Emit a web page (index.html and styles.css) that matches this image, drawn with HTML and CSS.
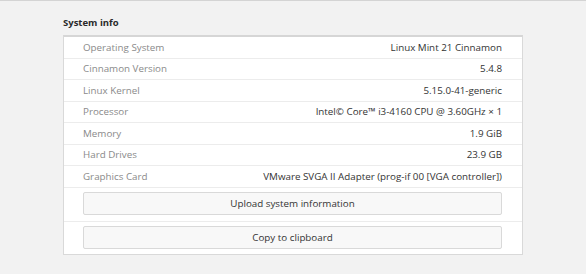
FILE: index.html
```html
<!DOCTYPE html>
<html>
<head>
<meta charset="utf-8">
<title>System info</title>
<link rel="stylesheet" href="styles.css">
</head>
<body>
<div class="page">
	<h2 class="title">System info</h2>
	<div class="box">
		<div class="row"><span class="label">Operating System</span><span class="value">Linux Mint 21 Cinnamon</span></div>
		<div class="row"><span class="label">Cinnamon Version</span><span class="value">5.4.8</span></div>
		<div class="row"><span class="label">Linux Kernel</span><span class="value">5.15.0-41-generic</span></div>
		<div class="row"><span class="label">Processor</span><span class="value">Intel© Core™ i3-4160 CPU @ 3.60GHz × 1</span></div>
		<div class="row"><span class="label">Memory</span><span class="value">1.9 GiB</span></div>
		<div class="row"><span class="label">Hard Drives</span><span class="value">23.9 GB</span></div>
		<div class="row"><span class="label">Graphics Card</span><span class="value">VMware SVGA II Adapter (prog-if 00 [VGA controller])</span></div>
		<div class="btnrow"><button class="btn">Upload system information</button></div>
		<div class="btnrow"><button class="btn">Copy to clipboard</button></div>
	</div>
</div>
</body>
</html>
```
FILE: styles.css
```css
*{ margin:0; padding:0; box-sizing:border-box;}
body{ background:#f2f2f2; font-family:"Open Sans","DejaVu Sans",sans-serif; width:586px; height:274px; overflow:hidden;}
.page{ border-top:1px solid #d4d4d4; padding:15px 0 0 63px; height:274px;}
.title{ font-size:9.5px; font-weight:bold; color:#2a2a2a; line-height:14px; height:19px;}
.box{ width:460px; background:#fff; border:1px solid #d9d9d9; border-top:2px solid #d6d6d6;}
.row{ display:flex; justify-content:space-between; align-items:center; height:21.5px; padding:0 20px 0 19px; border-bottom:1px solid #ececec; font-size:9.8px;}
.label{ color:#8a8a8a;}
.value{ color:#333;}
.btnrow{ padding:4px 20px 6px 19px; border-bottom:1px solid #ececec;}
.btnrow:last-child{ border-bottom:none; padding:4px 20px 5px 19px;}
.btn{ display:block; width:100%; height:23px; background:#f8f8f8; border:1px solid #d9d9d9; border-radius:2px; font-family:inherit; font-size:9.8px; color:#333;}
```
